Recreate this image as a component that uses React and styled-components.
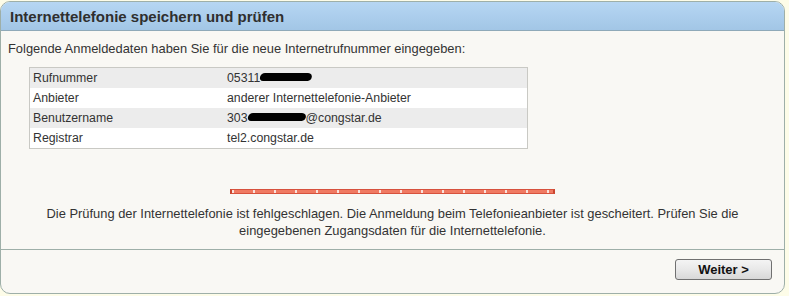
import React from "react"
import styled, { createGlobalStyle } from "styled-components"

const Global = createGlobalStyle`
body {
  margin: 0;
  background: #fdfce8;
  font-family: "Liberation Sans", Arial, sans-serif;
}
`

const Box = styled.div`
width: 783px;
height: 291px;
margin-top: 1px;
border: 1px solid #9eafa8;
border-radius: 10px;
background: #f9f8f4;
display: flex;
flex-direction: column;
overflow: hidden;
`

const Header = styled.div`
height: 28px;
background: linear-gradient(#b6d6f3, #a2c6e6);
border-bottom: 1px solid #8fa9b8;
display: flex;
align-items: center;
padding-left: 9px;
`

const Title = styled.h2`
margin: 0;
font-size: 15px;
font-weight: bold;
color: #2f2f2f;
`

const Content = styled.div`
flex: 1;
display: flex;
flex-direction: column;
padding: 10px 0 0 0;
`

const Intro = styled.p`
margin: 0 0 10px 7px;
font-size: 12.9px;
color: #333;
line-height: 16px;
`

const Table = styled.div`
margin-left: 28px;
width: 497px;
border: 1px solid #c9c9c4;
background: #fff;
`

const Row = styled.div`
display: flex;
height: 20px;
align-items: center;
background: ${p => (p.$alt ? "#ececec" : "#fff")};
font-size: 12.3px;
color: #333;
`

const Label = styled.span`
width: 194px;
padding-left: 3px;
`

const Value = styled.span`
display: flex;
align-items: center;
`

const Blot = styled.span`
display: inline-block;
width: ${p => p.$w}px;
height: 8px;
background: #000;
border-radius: 4px 6px 3px 5px;
transform: skewX(-20deg);
margin-top: -3px;
`

const Progress = styled.div`
margin: 40px auto 0;
width: 325px;
height: 5px;
background: repeating-linear-gradient(90deg, #f9e2dc 0 2px, #f07a62 2px 21px);
border-top: 1px solid #d7523d;
border-bottom: 1px solid #d7523d;
box-sizing: border-box;
border-left: 2px solid #c9462f;
border-right: 2px solid #c9462f;
`

const Error = styled.p`
margin: 11px 40px 0;
text-align: center;
font-size: 12.9px;
line-height: 17px;
color: #333;
`

const Footer = styled.div`
margin-top: auto;
border-top: 1px solid #9eafa8;
height: 43px;
display: flex;
justify-content: flex-end;
align-items: center;
padding-right: 12px;
`

const Button = styled.button`
width: 97px;
height: 21px;
margin-top: -5px;
border: 1px solid #707070;
border-radius: 3px;
background: linear-gradient(#f4f4f4 0%, #e8e8e8 50%, #d8d8d8 100%);
font-family: "Liberation Sans", Arial, sans-serif;
font-size: 13px;
font-weight: bold;
color: #111;
padding: 0;
`

const rows = [
  { label: "Rufnummer", value: <>05311<Blot $w={52} /></> },
  { label: "Anbieter", value: "anderer Internettelefonie-Anbieter" },
  { label: "Benutzername", value: <>303<Blot $w={58} />@congstar.de</> },
  { label: "Registrar", value: "tel2.congstar.de" },
]

export default function App() {
  return (
    <>
      <Global />
      <Box>
        <Header>
          <Title>Internettelefonie speichern und prüfen</Title>
        </Header>
        <Content>
          <Intro>Folgende Anmeldedaten haben Sie für die neue Internetrufnummer eingegeben:</Intro>
          <Table>
            {rows.map((r, i) => (
              <Row key={r.label} $alt={i % 2 === 0}>
                <Label>{r.label}</Label>
                <Value>{r.value}</Value>
              </Row>
            ))}
          </Table>
          <Progress />
          <Error>
            Die Prüfung der Internettelefonie ist fehlgeschlagen. Die Anmeldung beim Telefonieanbieter ist gescheitert. Prüfen Sie die eingegebenen Zugangsdaten für die Internettelefonie.
          </Error>
        </Content>
        <Footer>
          <Button>Weiter &gt;</Button>
        </Footer>
      </Box>
    </>
  )
}
